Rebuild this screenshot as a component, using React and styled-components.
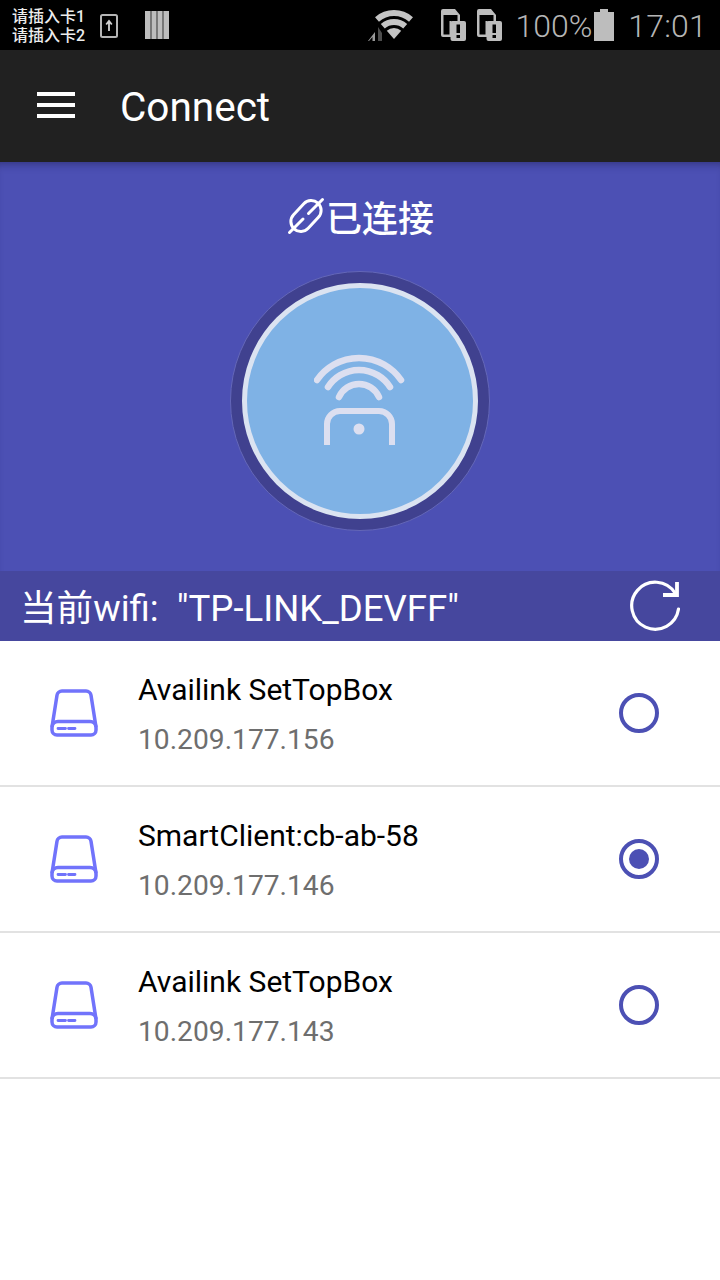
import React from "react";
import styled, { createGlobalStyle } from "styled-components";

const Global = createGlobalStyle`
  html, body {
    margin: 0;
    padding: 0;
    background: #fff;
  }
  * {
    box-sizing: border-box;
  }
`;

const Page = styled.div`
  width: 720px;
  height: 1280px;
  overflow: hidden;
  background: #fff;
  font-family: Roboto, "Noto Sans CJK SC", sans-serif;
  display: flex;
  flex-direction: column;
`;

const StatusBar = styled.div`
  height: 50px;
  background: #000;
  display: flex;
  align-items: center;
  padding: 0 13px 0 12px;
  flex: none;
`;
const SimText = styled.div`
  color: #ececec;
  font-size: 16px;
  font-weight: 500;
  line-height: 19px;
  width: 88px;
  margin-top: 2px;
  white-space: nowrap;
`;
const StatusLeft = styled.div`
  display: flex;
  align-items: center;
  flex: 1;
`;
const StatusRight = styled.div`
  display: flex;
  align-items: center;
`;
const StatusText = styled.span`
  font-size: 32px;
  line-height: 50px;
  color: #b5b5b5;
  margin-top: 2px;
  margin-left: ${(p) => p.$left || 0}px;
  letter-spacing: ${(p) => p.$spacing || 0}px;
  font-weight: 300;
`;
const StatusIcon = styled.svg`
  display: block;
  flex: none;
  margin-left: ${(p) => p.$left || 0}px;
  margin-top: ${(p) => p.$top || 0}px;
`;

const Toolbar = styled.div`
  height: 112px;
  background: #212121;
  display: flex;
  align-items: center;
  padding-left: 37px;
  flex: none;
`;
const Burger = styled.div`
  width: 38px;
  height: 26px;
  display: flex;
  flex-direction: column;
  justify-content: space-between;
  margin-top: -3px;
  span {
    display: block;
    height: 4px;
    background: #fff;
  }
`;
const Title = styled.div`
  font-size: 40.5px;
  color: #fff;
  margin-left: 45px;
  margin-top: 1px;
`;

const Hero = styled.div`
  height: 409px;
  background: #4c50b4;
  flex: none;
  display: flex;
  flex-direction: column;
  align-items: center;
  box-shadow: inset 0 8px 8px -6px rgba(20, 20, 60, 0.45);
`;
const StateRow = styled.div`
  display: flex;
  align-items: center;
  height: 40px;
  margin-top: 34px;
  color: #fff;
  font-size: 36px;
  font-weight: 500;
  font-family: "Noto Sans CJK SC", sans-serif;
`;
const Dial = styled.div`
  width: 260px;
  height: 260px;
  margin-top: 35px;
  border-radius: 50%;
  background: #40418f;
  border: 1.5px solid #6467b8;
  display: flex;
  align-items: center;
  justify-content: center;
`;
const DialInner = styled.div`
  width: 236px;
  height: 236px;
  border-radius: 50%;
  background: #7fb2e5;
  border: 5px solid #dbe3f1;
  display: flex;
  align-items: center;
  justify-content: center;
`;

const WifiBar = styled.div`
  height: 70px;
  background: #46479e;
  flex: none;
  display: flex;
  align-items: center;
  padding: 0 40px 0 20px;
  color: #fff;
  font-size: 36.6px;
  justify-content: space-between;
`;
const WifiName = styled.div`
  white-space: pre;
  margin-top: -1px;
`;

const Row = styled.div`
  height: 146px;
  border-bottom: 2px solid #e2e2e2;
  display: flex;
  align-items: center;
  padding: 0 61px 0 50px;
  flex: none;
`;
const RowText = styled.div`
  margin-left: 40px;
  flex: 1;
  margin-top: 3px;
`;
const RowName = styled.div`
  font-size: 30px;
  line-height: 40px;
  color: #000;
`;
const RowIp = styled.div`
  font-size: 28.2px;
  line-height: 40px;
  margin-top: 10px;
  color: #6e6e6e;
`;
const Radio = styled.div`
  width: 40px;
  height: 40px;
  border-radius: 50%;
  border: 4px solid #4c50b4;
  display: flex;
  align-items: center;
  justify-content: center;
  &::after {
    content: "";
    display: ${(p) => (p.$on ? "block" : "none")};
    width: 20px;
    height: 20px;
    border-radius: 50%;
    background: #4c50b4;
  }
`;

const devices = [
  { name: "Availink SetTopBox", ip: "10.209.177.156" },
  { name: "SmartClient:cb-ab-58", ip: "10.209.177.146", on: true },
  { name: "Availink SetTopBox", ip: "10.209.177.143" },
];

const SimAlert = ({ left }) => (
  <StatusIcon $left={left} width="25" height="32" viewBox="0 0 25 32">
    <path d="M2 0h12l5 6v6H10.500v16H2a2 2 0 0 1-2-2V2a2 2 0 0 1 2-2z" fill="#bdbdbd" />
    <path d="M2.500 6h14v6H8.500v13.500h-6z" fill="#000" />
    <rect x="9.500" y="12" width="15.500" height="20" rx="2" fill="#bdbdbd" />
    <rect x="15.500" y="15.500" width="3.500" height="8.500" fill="#000" />
    <rect x="15.500" y="26" width="3.500" height="3" fill="#000" />
  </StatusIcon>
);

const WifiIcon = () => (
  <StatusIcon width="48" height="34" viewBox="0 0 48 34">
    <g fill="none" stroke="#c4c4c4" strokeWidth="6">
      <path d="M9 11.400A26 26 0 0 1 43 11.400" />
      <path d="M14.800 18.200A17 17 0 0 1 37.200 18.200" />
    </g>
    <path d="M26 31L18.800 22.700A11 11 0 0 1 33.200 22.700z" fill="#c4c4c4" />
    <path d="M7 24v9H4.500v-4L1 33H0z" fill="#9a9a9a" />
    <path d="M10 33V19l4 6v8z" fill="#4d4d4d" />
  </StatusIcon>
);

const DriveIcon = () => (
  <svg width="48" height="48" viewBox="0 0 48 48" style={{ flex: "none" }}>
    <g fill="none" stroke="#7173fb" strokeWidth="3.500" strokeLinejoin="round">
      <path d="M12 2h24a5 5 0 0 1 5 4.300L46 38v3a5 5 0 0 1-5 5H7a5 5 0 0 1-5-5v-3L7 6.300A5 5 0 0 1 12 2z" />
      <path d="M2 38a6 6 0 0 1 6-5.500h32a6 6 0 0 1 6 5.500" />
    </g>
    <path d="M8 39.500h7.500M18.500 39.500H25" stroke="#7173fb" strokeWidth="2.800" strokeLinecap="round" />
  </svg>
);

const LinkIcon = () => (
  <svg width="40" height="40" viewBox="0 0 40 40" style={{ flex: "none" }}>
    <g fill="none" stroke="#fff" strokeWidth="3" strokeLinecap="round">
      <rect x="2.500" y="10" width="35" height="20" rx="10" transform="rotate(-47 20 20)" />
      <path d="M3.500 36.500L17 23M22.500 17.500L36.500 3.500" />
    </g>
  </svg>
);

const ApIcon = () => (
  <svg width="92" height="94" viewBox="0 0 92 94">
    <g fill="none" stroke="#dcdff0" strokeWidth="6.500" strokeLinecap="round">
      <path d="M3 26A51 51 0 0 1 87 26" />
      <path d="M14 33A36.800 36.800 0 0 1 76 33" />
      <path d="M25 43A21.900 21.900 0 0 1 65 43" />
    </g>
    <path
      d="M13 91V70a13 13 0 0 1 13-13h39a13 13 0 0 1 13 13v21"
      fill="none"
      stroke="#dcdff0"
      strokeWidth="6"
    />
    <circle cx="45" cy="75" r="5.500" fill="#dcdff0" />
  </svg>
);

const RefreshIcon = () => (
  <svg width="50" height="52" viewBox="0 0 50 52">
    <path d="M48.500 29A23.500 23.500 0 1 1 45 13" fill="none" stroke="#fff" strokeWidth="3.200" strokeLinecap="round" />
    <path d="M33 15h14V2" fill="none" stroke="#fff" strokeWidth="3.800" />
  </svg>
);

export default function App() {
  return (
    <Page>
      <Global />
      <StatusBar>
        <StatusLeft>
          <SimText>
            请插入卡1
            <br />
            请插入卡2
          </SimText>
          <StatusIcon $top={1} width="18" height="24" viewBox="0 0 18 24">
            <rect x="1" y="1" width="16" height="22" rx="1.500" fill="none" stroke="#b5b5b5" strokeWidth="2" />
            <path d="M9 17V8M6.200 10.500L9 7l2.800 3.500" fill="none" stroke="#d0d0d0" strokeWidth="1.800" />
          </StatusIcon>
          <StatusIcon $left={27} width="24" height="30" viewBox="0 0 24 30">
            <path d="M0 1h24v28H0z" fill="#bdbdbd" />
            <path d="M6 1v28M12 1v28M18 1v28" stroke="#4a4a4a" strokeWidth="1.200" />
          </StatusIcon>
        </StatusLeft>
        <StatusRight>
          <WifiIcon />
          <SimAlert left={25} />
          <SimAlert left={11} />
          <StatusText $left={13}>100%</StatusText>
          <StatusIcon width="20" height="32" viewBox="0 0 20 32" $left={2}>
            <path d="M6 0h8v3h6v29H0V3h6z" fill="#bdbdbd" />
          </StatusIcon>
          <StatusText $left={14} $spacing={0.2}>
            17:01
          </StatusText>
        </StatusRight>
      </StatusBar>

      <Toolbar>
        <Burger>
          <span />
          <span />
          <span />
        </Burger>
        <Title>Connect</Title>
      </Toolbar>

      <Hero>
        <StateRow>
          <LinkIcon />
          已连接
        </StateRow>
        <Dial>
          <DialInner>
            <ApIcon />
          </DialInner>
        </Dial>
      </Hero>

      <WifiBar>
        <WifiName>当前wifi:  "TP-LINK_DEVFF"</WifiName>
        <RefreshIcon />
      </WifiBar>

      {devices.map((d) => (
        <Row key={d.ip}>
          <DriveIcon />
          <RowText>
            <RowName>{d.name}</RowName>
            <RowIp>{d.ip}</RowIp>
          </RowText>
          <Radio $on={d.on} />
        </Row>
      ))}
    </Page>
  );
}
